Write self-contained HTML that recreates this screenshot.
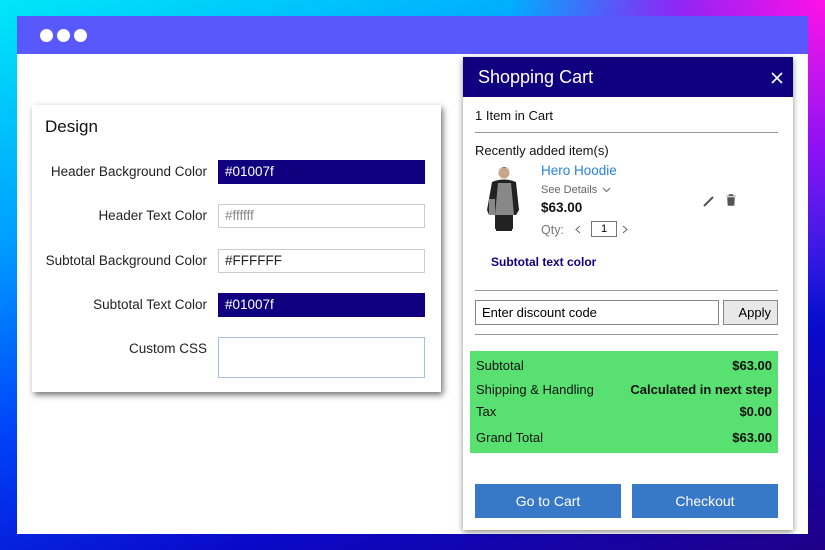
<!DOCTYPE html>
<html><head><meta charset="utf-8"><style>
*{box-sizing:border-box;margin:0;padding:0}
body{width:825px;height:550px;overflow:hidden;font-family:"Liberation Sans",sans-serif;position:relative;
background:radial-gradient(ellipse 420px 420px at 100% 0%,#ff10e8 0%,rgba(190,0,240,.75) 35%,rgba(120,0,230,0) 75%),
linear-gradient(160deg,#00e8f8 0%,#00a0ff 28%,#0040f8 52%,#0a08c8 75%,#200088 100%);}
.win{position:absolute;left:17px;top:16px;width:791px;height:518px;background:#fff;}
.bar{height:38px;background:#5858fc;position:relative}
.dot{position:absolute;top:13px;width:13px;height:13px;border-radius:50%;background:#fff}
.design{position:absolute;left:15px;top:89px;width:409px;height:287px;background:#fff;box-shadow:2px 3px 6px rgba(0,0,0,.55);}
.design h2{position:absolute;left:13px;top:12px;font-size:17px;font-weight:normal;color:#111}
.lbl{position:absolute;right:234px;font-size:13.5px;color:#222;text-align:right;white-space:nowrap}
.inp{position:absolute;left:186px;width:207px;height:24px;border:1px solid #ccc;font-size:13.5px;padding:3px 6px;color:#222}
.dk{background:#10007f;color:#fff;border-color:#10007f}
.cart{position:absolute;left:446px;top:41px;width:330px;height:473px;background:#fff;box-shadow:0 2px 6px rgba(0,0,0,.45)}
.ch{height:40px;background:#10007f;color:#fff;font-size:18px;padding:10px 15px;position:relative}
.t{position:absolute;font-size:13px;color:#111;white-space:nowrap}
.hr{position:absolute;left:12px;width:303px;height:1px;background:#999}
.green{position:absolute;left:7px;top:294px;width:308px;height:102px;background:#58e070}
.btn{position:absolute;top:427px;width:146px;height:34px;background:#3878c8;color:#fff;font-size:14px;text-align:center;line-height:34px}
</style></head><body>
<div class="win">
 <div class="bar"><div class="dot" style="left:23px"></div><div class="dot" style="left:40px"></div><div class="dot" style="left:57px"></div></div>
 <div class="design">
  <h2>Design</h2>
  <div class="lbl" style="top:59px">Header Background Color</div><div class="inp dk" style="top:55px">#01007f</div>
  <div class="lbl" style="top:103px">Header Text Color</div><div class="inp" style="top:99px;color:#888">#ffffff</div>
  <div class="lbl" style="top:148px">Subtotal Background Color</div><div class="inp" style="top:144px">#FFFFFF</div>
  <div class="lbl" style="top:192px">Subtotal Text Color</div><div class="inp dk" style="top:188px">#01007f</div>
  <div class="lbl" style="top:236px">Custom CSS</div><div class="inp" style="top:232px;height:41px;border-color:#a8c0e0"></div>
 </div>
 <div class="cart">
  <div class="ch">Shopping Cart
   <svg style="position:absolute;right:10px;top:15px" width="12" height="12"><path d="M1 1L11 11M11 1L1 11" stroke="#fff" stroke-width="1.6"/></svg></div>
  <div class="t" style="left:12px;top:51px">1 Item in Cart</div>
  <div class="hr" style="top:75px"></div>
  <div class="t" style="left:12px;top:86px">Recently added item(s)</div>
  <svg style="position:absolute;left:20px;top:108px" width="40" height="70" viewBox="0 0 40 70">
   <circle cx="21" cy="8" r="5.5" fill="#c9a58a"/><path d="M15.5 5Q21 -1 26.5 5L26 4Q21 1 16 4Z" fill="#333"/>
   <path d="M9 17Q21 12 33 17L36 45L33 50L30 50L30 64L12 64L12 50L6 50L4 45Z" fill="#222"/>
   <path d="M15 18L28 18L31 50L12 50Z" fill="#888"/><path d="M6 34L12 34L12 50L6 50Z" fill="#888"/>
   <path d="M13 50L29 50L29 66L13 66Z" fill="#222"/>
  </svg>
  <div class="t" style="left:78px;top:106px;color:#2a80d8;font-size:13.5px">Hero Hoodie</div>
  <div class="t" style="left:78px;top:127px;color:#666;font-size:11px">See Details</div>
  <svg style="position:absolute;left:139px;top:130px" width="9" height="6"><path d="M1 1L4.5 4.5L8 1" stroke="#666" fill="none"/></svg>
  <div class="t" style="left:78px;top:143px;font-weight:bold;font-size:13.5px">$63.00</div>
  <div class="t" style="left:78px;top:166px;color:#777;font-size:12.5px">Qty:</div>
  <svg style="position:absolute;left:112px;top:168px" width="6" height="9"><path d="M5 1L1 4.5L5 8" stroke="#666" fill="none"/></svg>
  <div style="position:absolute;left:128px;top:164px;width:26px;height:16px;border:1px solid #777;font-size:11px;text-align:center;line-height:14px">1</div>
  <svg style="position:absolute;left:159px;top:168px" width="6" height="9"><path d="M1 1L5 4.5L1 8" stroke="#666" fill="none"/></svg>
  <svg style="position:absolute;left:240px;top:138px" width="12" height="12"><path d="M1 11L10 2" stroke="#555" stroke-width="2"/></svg>
  <svg style="position:absolute;left:263px;top:137px" width="10" height="12"><path d="M0 2H10M3 2V0.5H7V2M1.5 3.5H8.5L8 11.5H2Z" fill="#555" stroke="#555" stroke-width=".6"/></svg>
  <div class="t" style="left:28px;top:198px;color:#10007f;font-size:12px;font-weight:bold">Subtotal text color</div>
  <div class="hr" style="top:233px"></div>
  <div style="position:absolute;left:12px;top:243px;width:244px;height:25px;border:1px solid #888;font-size:13px;padding:4px 6px">Enter discount code</div>
  <div style="position:absolute;left:260px;top:243px;width:55px;height:25px;border:1px solid #888;background:#e8e8e8;font-size:13px;padding:4px 0;text-align:right;padding-right:6px">Apply</div>
  <div class="hr" style="top:277px"></div>
  <div class="green">
   <div class="t" style="left:6px;top:7px">Subtotal</div><div class="t" style="right:6px;top:7px;font-weight:bold">$63.00</div>
   <div class="t" style="left:6px;top:31px">Shipping &amp; Handling</div><div class="t" style="right:6px;top:31px;font-weight:bold">Calculated in next step</div>
   <div class="t" style="left:6px;top:53px">Tax</div><div class="t" style="right:6px;top:53px;font-weight:bold">$0.00</div>
   <div class="t" style="left:6px;top:79px">Grand Total</div><div class="t" style="right:6px;top:79px;font-weight:bold">$63.00</div>
  </div>
  <div class="btn" style="left:12px">Go to Cart</div>
  <div class="btn" style="left:169px">Checkout</div>
 </div>
</div>
</body></html>
